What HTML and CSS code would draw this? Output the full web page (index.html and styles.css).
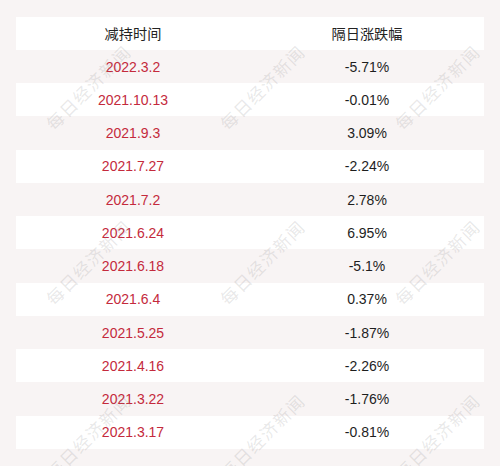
FILE: index.html
```html
<!DOCTYPE html>
<html lang="zh-CN">
<head>
<meta charset="utf-8">
<link rel="stylesheet" href="styles.css">
</head>
<body>
<div class="page">
  <div class="table">
    <div class="row head"><div class="cell">减持时间</div><div class="cell">隔日涨跌幅</div></div>
    <div class="row alt"><div class="cell date">2022.3.2</div><div class="cell">-5.71%</div></div>
    <div class="row"><div class="cell date">2021.10.13</div><div class="cell">-0.01%</div></div>
    <div class="row alt"><div class="cell date">2021.9.3</div><div class="cell">3.09%</div></div>
    <div class="row"><div class="cell date">2021.7.27</div><div class="cell">-2.24%</div></div>
    <div class="row alt"><div class="cell date">2021.7.2</div><div class="cell">2.78%</div></div>
    <div class="row"><div class="cell date">2021.6.24</div><div class="cell">6.95%</div></div>
    <div class="row alt"><div class="cell date">2021.6.18</div><div class="cell">-5.1%</div></div>
    <div class="row"><div class="cell date">2021.6.4</div><div class="cell">0.37%</div></div>
    <div class="row alt"><div class="cell date">2021.5.25</div><div class="cell">-1.87%</div></div>
    <div class="row"><div class="cell date">2021.4.16</div><div class="cell">-2.26%</div></div>
    <div class="row alt"><div class="cell date">2021.3.22</div><div class="cell">-1.76%</div></div>
    <div class="row"><div class="cell date">2021.3.17</div><div class="cell">-0.81%</div></div>
  </div>
  <div class="wm-layer">
    <span class="wm" style="left:88px;top:87px">每日经济新闻</span>
    <span class="wm" style="left:262px;top:87px">每日经济新闻</span>
    <span class="wm" style="left:437px;top:87px">每日经济新闻</span>
    <span class="wm" style="left:88px;top:262px">每日经济新闻</span>
    <span class="wm" style="left:262px;top:262px">每日经济新闻</span>
    <span class="wm" style="left:437px;top:262px">每日经济新闻</span>
    <span class="wm" style="left:88px;top:436px">每日经济新闻</span>
    <span class="wm" style="left:262px;top:436px">每日经济新闻</span>
    <span class="wm" style="left:437px;top:436px">每日经济新闻</span>
  </div>
</div>
</body>
</html>
```

FILE: styles.css
```css
html, body {
  margin: 0;
  padding: 0;
  background: #f8f4f4;
}
.page {
  position: relative;
  width: 500px;
  height: 466px;
  overflow: hidden;
  box-sizing: border-box;
  padding: 16.7px 16px 0 16px;
  font-family: "Liberation Sans", "Noto Sans CJK SC", sans-serif;
  font-size: 14px;
  color: #1e1e1e;
}
.table {
  display: flex;
  flex-direction: column;
  width: 468px;
}
.row {
  display: grid;
  grid-template-columns: 1fr 1fr;
  height: 33.25px;
  background: #ffffff;
}
.row.alt {
  background: #f8f4f4;
}
.cell {
  display: flex;
  align-items: center;
  justify-content: center;
}
.head .cell {
  font-family: "Noto Sans CJK SC", sans-serif;
  font-size: 14.2px;
  color: #222;
}
.date {
  color: #c42a3c;
}
.wm-layer {
  position: absolute;
  inset: 0;
  pointer-events: none;
}
.wm {
  position: absolute;
  transform: translate(-50%, -50%) rotate(-45deg);
  white-space: nowrap;
  font-family: "Noto Sans CJK SC", sans-serif;
  font-size: 17px;
  letter-spacing: 1.5px;
  font-weight: 400;
  color: rgba(140, 140, 140, 0.2);
}
```
